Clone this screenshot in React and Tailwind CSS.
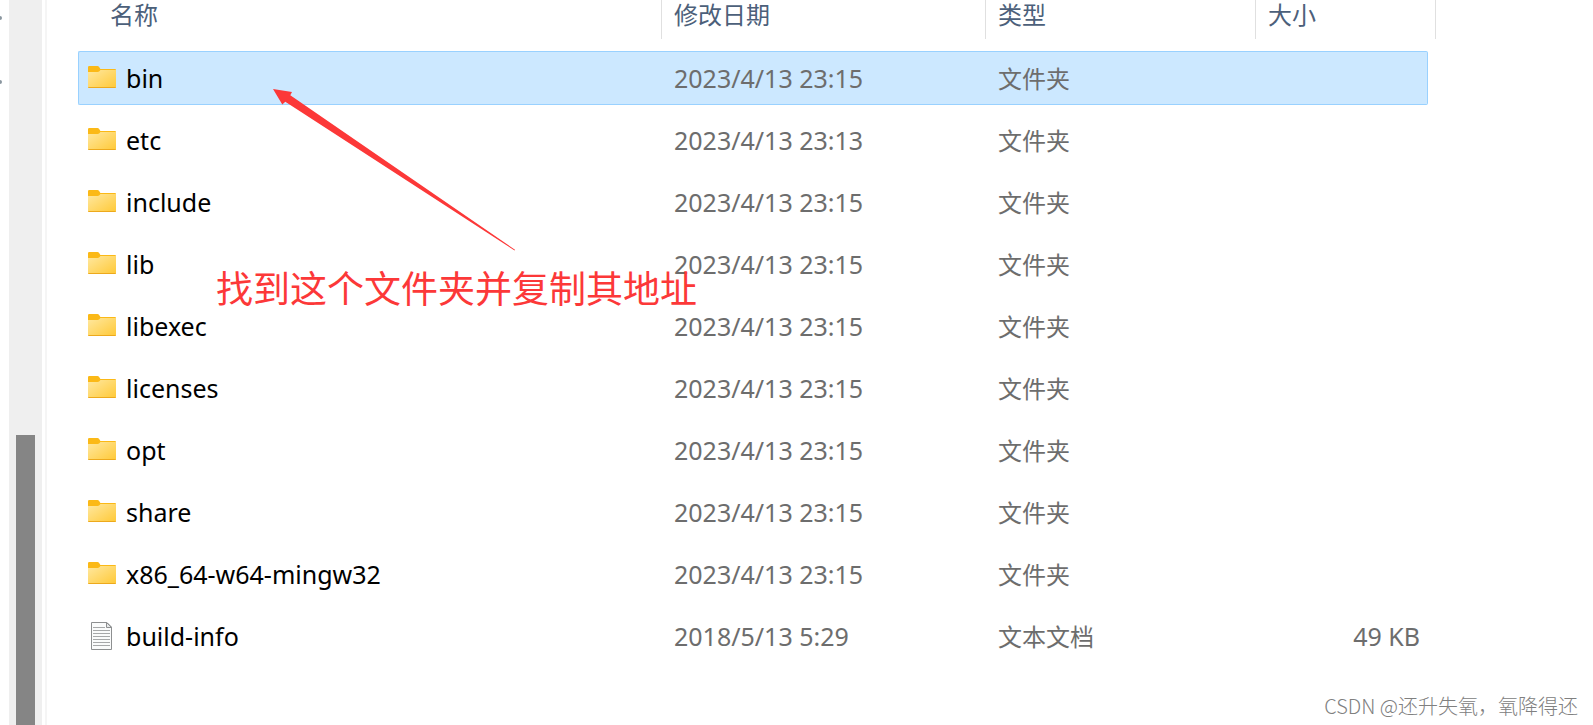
import { useState } from "react";

const files = [
  { name: "bin", date: "2023/4/13 23:15", type: "文件夹", kind: "folder" },
  { name: "etc", date: "2023/4/13 23:13", type: "文件夹", kind: "folder" },
  { name: "include", date: "2023/4/13 23:15", type: "文件夹", kind: "folder" },
  { name: "lib", date: "2023/4/13 23:15", type: "文件夹", kind: "folder" },
  { name: "libexec", date: "2023/4/13 23:15", type: "文件夹", kind: "folder" },
  { name: "licenses", date: "2023/4/13 23:15", type: "文件夹", kind: "folder" },
  { name: "opt", date: "2023/4/13 23:15", type: "文件夹", kind: "folder" },
  { name: "share", date: "2023/4/13 23:15", type: "文件夹", kind: "folder" },
  { name: "x86_64-w64-mingw32", date: "2023/4/13 23:15", type: "文件夹", kind: "folder" },
  { name: "build-info", date: "2018/5/13 5:29", type: "文本文档", size: "49 KB", kind: "text" },
];

const columns = [
  { id: "name", label: "名称", pad: "pl-8" },
  { id: "date", label: "修改日期", pad: "pl-3" },
  { id: "type", label: "类型", pad: "pl-3" },
  { id: "size", label: "大小", pad: "pl-3" },
];

function FolderIcon() {
  return (
    <svg className="w-7 h-7 shrink-0" viewBox="0 0 28 28" aria-hidden="true">
      <defs>
        <linearGradient id="folder" x1="0" y1="0" x2="1" y2="1">
          <stop offset="0" stopColor="#ffe8a0" />
          <stop offset="1" stopColor="#ffc937" />
        </linearGradient>
      </defs>
      <path d="M0 3.2Q0 2 1.2 2H9.4Q10.4 2 11 2.8L12.4 5H27Q28 5 28 6V12H0Z" fill="#fbb917" />
      <path d="M0 8H9.6Q10.6 8 11.4 7.2L12.4 6H28V23Q28 24 27 24H1Q0 24 0 23Z" fill="url(#folder)" />
      <path d="M0.3 23.5H27.7" stroke="#eda91c" strokeWidth="1" />
    </svg>
  );
}

function TextIcon() {
  return (
    <svg className="w-7 h-7 shrink-0" viewBox="0 0 28 28" aria-hidden="true">
      <path d="M3.5 0.5H19L23.5 5V27.5H3.5Z" fill="#fafbfb" stroke="#8d8f90" />
      <path d="M18.5 0.5V5.5H23.5Z" fill="#e6e8e9" stroke="#8d8f90" strokeLinejoin="round" />
      <path d="M5 5.5H17M5 8.5H22M5 11.5H22M5 14.5H22M5 17.5H22M5 20.5H22M5 23.5H22" stroke="#a6a8a9" />
    </svg>
  );
}

function FileRow({ file, selected, onSelect }) {
  const fill = selected ? "bg-[#cce8ff] border-[#99d1ff]" : "border-transparent";

  return (
    <tr onClick={onSelect} aria-selected={selected} className="text-[#6d6d6d]">
      <td className="py-1">
        <div className={`flex items-center gap-[10px] h-[54px] pl-[9px] border border-r-0 rounded-l-xs ${fill}`}>
          {file.kind === "folder" ? <FolderIcon /> : <TextIcon />}
          <span className="pt-[2px] text-[25px] text-black">{file.name}</span>
        </div>
      </td>
      <td className="py-1">
        <div className={`flex items-center h-[54px] pt-[2px] pl-3 border-y text-[25px] ${fill}`}>{file.date}</div>
      </td>
      <td className="py-1">
        <div className={`flex items-center h-[54px] pt-[2px] pl-3 border-y text-[24px] ${fill}`}>{file.type}</div>
      </td>
      <td className="py-1 pr-2">
        <div
          className={`flex items-center justify-end h-[54px] pt-[2px] pr-[7px] border border-l-0 rounded-r-xs text-[25px] ${fill}`}
        >
          {file.size}
        </div>
      </td>
    </tr>
  );
}

export default function App() {
  const [selected, setSelected] = useState("bin");

  return (
    <div className="relative flex min-h-screen overflow-hidden bg-white font-['Noto_Sans','Noto_Sans_CJK_SC',sans-serif]">
      {/* Navigation pane edge */}
      <div className="w-[9px] shrink-0 overflow-hidden pt-4">
        <div className="w-1 h-1 -ml-[2px] rounded-full bg-[#8a969f]" />
        <div className="w-1 h-1 -ml-[2px] mt-15 rounded-full bg-[#8a969f]" />
      </div>

      {/* Scrollbar */}
      <div className="flex flex-col justify-end items-center w-[33px] shrink-0 bg-[#efefef]">
        <div className="w-[19px] h-[40vh] bg-[#858585]" />
      </div>
      <div className="w-[5px] shrink-0 border-r-2 border-[#f5f5f5]" />

      {/* File list */}
      <main className="flex-1 min-w-0 pl-[31px] pr-[157px]">
        <table className="w-full table-fixed border-separate border-spacing-0 text-left whitespace-nowrap">
          <colgroup>
            <col />
            <col className="w-[324px]" />
            <col className="w-[270px]" />
            <col className="w-[180px]" />
          </colgroup>
          <thead>
            <tr>
              {columns.map((col) => (
                <th key={col.id} className="p-0 pb-2 font-normal">
                  <button
                    className={`flex items-start w-full h-[39px] border-r border-[#e0e0e0] text-[24px] leading-[30px] text-[#4c607a] ${col.pad}`}
                  >
                    {col.label}
                  </button>
                </th>
              ))}
            </tr>
          </thead>
          <tbody>
            {files.map((file) => (
              <FileRow
                key={file.name}
                file={file}
                selected={selected === file.name}
                onSelect={() => setSelected(file.name)}
              />
            ))}
          </tbody>
        </table>
      </main>

      {/* Annotation */}
      <svg
        className="absolute left-[273px] top-[89px] w-[244px] h-[163px] pointer-events-none"
        viewBox="0 0 244 163"
        aria-hidden="true"
      >
        <path d="M0 0L19 3L17.3 6.3L242 160.8L241.6 161.6L12.3 12.7L9.3 15.5Z" fill="#fc3838" />
      </svg>
      <p className="absolute left-[216px] top-[265px] text-[37px] leading-[48px] whitespace-nowrap text-[#fc3838] pointer-events-none">
        找到这个文件夹并复制其地址
      </p>

      <p className="absolute right-[15px] bottom-[5px] text-[20px] leading-[28px] font-light font-['Noto_Sans_CJK_SC',sans-serif] text-[#808080]">
        CSDN @还升失氧，氧降得还
      </p>
    </div>
  );
}
